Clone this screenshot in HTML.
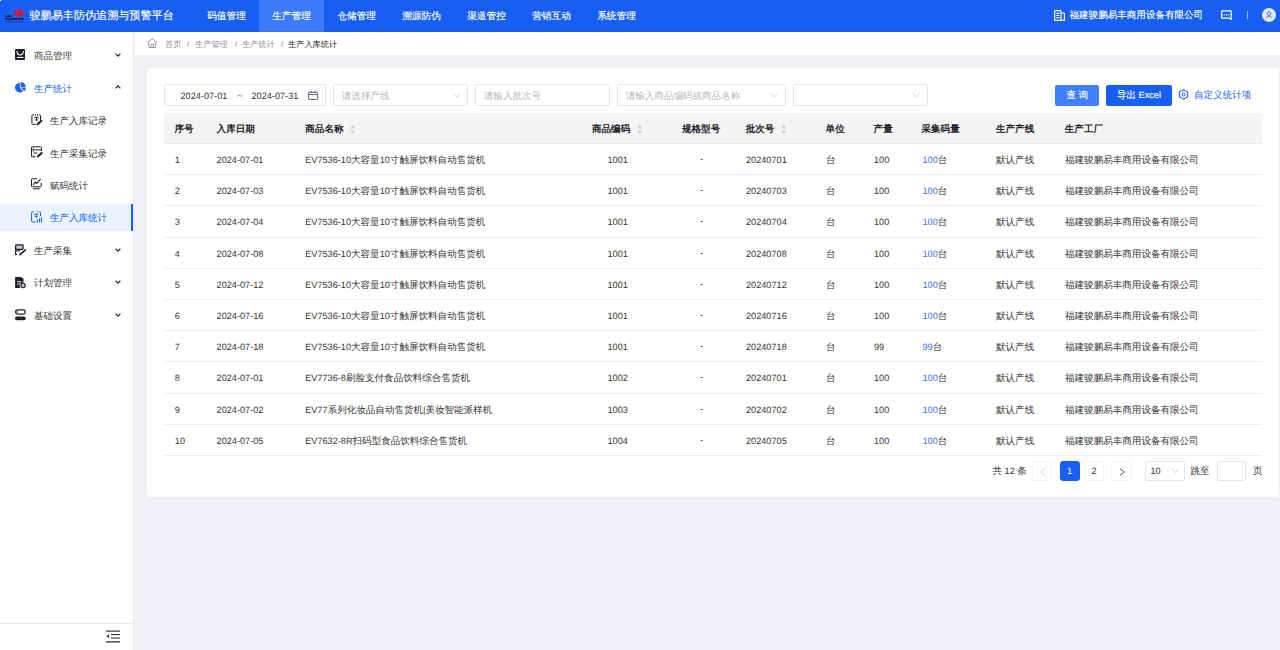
<!DOCTYPE html>
<html><head><meta charset="utf-8">
<style>
*{box-sizing:border-box;margin:0;padding:0}
html,body{width:1280px;height:650px;overflow:hidden;background:#f0f1f5;font-family:"Liberation Sans",sans-serif;color:#1d2129;text-rendering:geometricPrecision}
.a{position:absolute;white-space:nowrap}
#hdr{position:absolute;left:0;top:0;width:1280px;height:32px;background:#175ef3}
.nav{position:absolute;top:0;height:32px;width:65px;line-height:34px;text-align:center;color:#fff;font-size:9.7px;-webkit-text-stroke:0.15px #fff}
.nav.on{background:#3c7bfe}
#side{position:absolute;left:0;top:32px;width:134px;height:618px;background:#fff;border-right:1px solid #e9e9ec}
.mi{position:absolute;left:0;width:133px;height:27px;font-size:9.5px;line-height:27px;color:#333}
.mi .t{position:absolute;left:34px;top:1px}
.mi.sub .t{left:50px;top:1.3px}
.mi.on{background:#e8f3ff;color:#165dff}
.mi svg{position:absolute}
.chev{position:absolute;left:115px;top:11px}
#crumb{position:absolute;left:134px;top:32px;width:1146px;height:23px;background:#fff;font-size:8.2px;line-height:25.2px;color:#86909c}
#card{position:absolute;left:147px;top:68px;width:1132px;height:429px;background:#fff;border-radius:3px}
.inp{position:absolute;top:84px;height:21.5px;border:1px solid #e5e6eb;border-radius:2px;background:#fff;font-size:9.55px;line-height:19.5px;color:#b4b8bf}
.inp .ph{position:absolute;left:7.5px;top:2px}
.inp svg{position:absolute;top:7px}
.btn{position:absolute;top:84.5px;height:21.3px;border-radius:2px;color:#fff;font-size:9.55px;line-height:22.3px;text-align:center;-webkit-text-stroke:0.15px #fff}
#th{position:absolute;left:164px;top:113px;width:1098px;height:31px;background:#f4f4f4;border-bottom:1px solid #e8e8e8;font-weight:bold}
.c{position:absolute;font-size:9.55px;white-space:nowrap;line-height:33px;top:0}
.row{position:absolute;left:164px;width:1098px;height:31.2px;border-bottom:1px solid #ededed;color:#333}
.row .c{line-height:33px}
.blue{color:#3373f6}
span .l,div .l{font-size:9.17px;line-height:0}
.c.l{font-size:9.17px}
.sort{position:absolute;top:11.5px}
.pg{position:absolute;top:461px;height:19.6px;width:20.1px;border:1px solid #f2f3f5;border-radius:2px;font-size:9.55px;line-height:20px;text-align:center;color:#333}
</style></head><body>
<div id="hdr">
  <svg class="a" style="left:0;top:0" width="30" height="32" viewBox="0 0 30 32">
    <g fill="#e0143c">
      <rect x="17" y="9.1" width="4.8" height="7.8" rx="1.6"/>
      <rect x="13.9" y="11.6" width="10.3" height="3" rx="1.5"/>
      <circle cx="15.2" cy="13.3" r="1.5"/><circle cx="22.9" cy="12.9" r="1.5"/>
    </g>
    <g fill="#8a3a7a" opacity=".8"><circle cx="18.5" cy="10.7" r=".6"/><circle cx="20.3" cy="10.7" r=".6"/><circle cx="18.5" cy="15.3" r=".6"/><circle cx="20.3" cy="15.3" r=".6"/><circle cx="19.4" cy="13" r=".5"/></g>
    <g stroke="#141a3c" fill="none">
      <path d="M5.2 16.1H11.7" stroke-width="1.6" stroke-dasharray="2.2 .6" opacity=".85"/>
      <path d="M5.2 18.85H23.5" stroke-width="1.9" stroke-dasharray="2.6 .5"/>
      <path d="M5.5 21.85H23" stroke-width="1.5" stroke-dasharray="1.1 1.6" opacity=".7"/>
    </g>
  </svg>
  <div class="a" style="left:29.5px;top:0;line-height:32px;font-size:11.1px;color:#fff;-webkit-text-stroke:0.15px #fff">骏鹏易丰防伪追溯与预警平台</div>
  <div class="nav" style="left:194px">码值管理</div>
  <div class="nav on" style="left:259px">生产管理</div>
  <div class="nav" style="left:324px">仓储管理</div>
  <div class="nav" style="left:389px">溯源防伪</div>
  <div class="nav" style="left:454px">渠道管控</div>
  <div class="nav" style="left:519px">营销互动</div>
  <div class="nav" style="left:584px">系统管理</div>
  <svg class="a" style="left:1054px;top:10px" width="11" height="11" viewBox="0 0 11 11" fill="none" stroke="#fff" stroke-width="1.2">
    <path d="M0.6 10.4V1.6Q0.6 0.6 1.6 0.6H6Q7 0.6 7 1.6V10.4M7 3H9.6Q10.4 3 10.4 3.8V10.4H0.6"/><path d="M2.3 3.3H5.3M2.3 5.5H5.3M2.3 7.7H5.3"/>
  </svg>
  <div class="a" style="left:1069.5px;top:0;line-height:31px;font-size:9.55px;color:#fff;-webkit-text-stroke:0.15px #fff">福建骏鹏易丰商用设备有限公司</div>
  <svg class="a" style="left:1221px;top:10px" width="11" height="11" viewBox="0 0 11 11" fill="none" stroke="#fff" stroke-width="1.2"><path d="M1.5 0.8H9.4Q10.2 0.8 10.2 1.6V9.6L8.6 8.2H1.5Q0.7 8.2 0.7 7.4V1.6Q0.7 0.8 1.5 0.8Z" stroke-linejoin="round"/><path d="M3.1 4V5.6M5.45 4V5.6M7.8 4V5.6" stroke-width="1"/></svg>
  <div class="a" style="left:1247px;top:11px;width:1px;height:8px;background:rgba(255,255,255,.55)"></div>
  <svg class="a" style="left:1262px;top:8px" width="14" height="14" viewBox="0 0 14 14"><circle cx="7" cy="7" r="7" fill="#e2eafc"/><g fill="none" stroke="#3c6ff0" stroke-width="1"><circle cx="7" cy="5.6" r="1.8"/><path d="M4.3 10.2Q5 8 7 8Q9 8 9.7 10.2"/></g></svg>
</div>
<div class="a" style="left:0;top:31px;width:1280px;height:1px;background:rgba(0,20,90,.07)"></div>
<div class="a" style="left:0;top:0;width:1px;height:1px;background:#fff"></div>

<div id="side">
  <div class="mi" style="top:9.5px">
    <svg style="left:15px;top:7px" width="10" height="11" viewBox="0 0 10 11"><rect x="0" y="0" width="10" height="11" rx="0.9" fill="#1d2129"/><path d="M1.9 2.1Q2.2 5.9 5.1 5.9Q8 5.9 8.5 2.1" fill="none" stroke="#fff" stroke-width="1.05"/><rect x="2.1" y="7.9" width="6.4" height="1.1" fill="#fff"/></svg>
    <span class="t">商品管理</span>
    <svg class="chev" width="6" height="4" viewBox="0 0 6 4"><path d="M0.6 0.7L3 3.1L5.4 0.7" fill="none" stroke="#1d2129" stroke-width="1.2"/></svg>
  </div>
  <div class="mi" style="top:42.5px;color:#165dff">
    <svg style="left:15px;top:7.5px" width="12" height="11" viewBox="0 0 12 11" fill="#1d62f7"><path d="M4.9 5.6L4.9 0.7A4.9 4.9 0 1 0 8.05 9.35Z"/><path d="M5.7 5.1L5.7 0.05A4.95 4.95 0 0 1 10.65 5.1Z"/><path d="M6.2 5.45L10.75 5.45A4.6 4.6 0 0 1 9.15 9.2Z"/></svg>
    <span class="t">生产统计</span>
    <svg class="chev" width="6" height="4" viewBox="0 0 6 4" style="top:10.5px"><path d="M0.6 3.3L3 0.9L5.4 3.3" fill="none" stroke="#1d2129" stroke-width="1.2"/></svg>
  </div>
  <div class="mi sub" style="top:75px">
    <svg style="left:31px;top:7px" width="12" height="12" viewBox="0 0 12 12" fill="none" stroke="#1d2129" stroke-width="1"><path d="M3 1H1.6Q0.9 1 0.9 1.7V9.6Q0.9 10.3 1.6 10.3H4.8M8 1H8.8Q9.5 1 9.5 1.7V6"/><path d="M4.3 0.2V1.8M6.6 0.2V1.8"/><path d="M3.3 3.4H7.7M5.5 3.4V6.2"/><path d="M3.8 5.4H7.2L5.5 7.2Z" fill="#1d2129" stroke="none"/><path d="M6.6 10.3L10.3 6.8" stroke-width="2.1" stroke-linecap="round"/></svg>
    <span class="t">生产入库记录</span>
  </div>
  <div class="mi sub" style="top:107.5px">
    <svg style="left:31px;top:6.5px" width="12" height="12" viewBox="0 0 12 12" fill="none" stroke="#1d2129" stroke-width="1"><path d="M4.5 10.8H1.3Q0.5 10.8 0.5 10V1.6Q0.5 0.8 1.3 0.8H9.7Q10.5 0.8 10.5 1.6V5M0.5 3.9H10.5"/><path d="M2.5 7H6.3"/><g fill="#1d2129" stroke="none"><circle cx="2.3" cy="2.4" r="0.5"/><circle cx="2.3" cy="5.5" r="0.5"/><circle cx="2.3" cy="9" r="0.5"/></g><path d="M7.1 10.3L10.6 7" stroke-width="2.1" stroke-linecap="round"/></svg>
    <span class="t">生产采集记录</span>
  </div>
  <div class="mi sub" style="top:139.5px">
    <svg style="left:31px;top:6.5px" width="12" height="12" viewBox="0 0 12 12" fill="none" stroke="#1d2129" stroke-width="1"><path d="M6.2 0.8H1.3Q0.5 0.8 0.5 1.6V8Q0.5 8.8 1.3 8.8H9.5Q10.3 8.8 10.3 8V4.8"/><path d="M2.2 10.8H8.8"/><path d="M2.2 6.8L4.3 4.2L5.6 5.5L9.6 1.2" stroke-width="1.2"/></svg>
    <span class="t">赋码统计</span>
  </div>
  <div class="mi sub on" style="top:171.8px">
    <svg style="left:31px;top:7.5px" width="12" height="12" viewBox="0 0 12 12" fill="none" stroke="#165dff" stroke-width="1"><path d="M3 0.9H1.6Q0.6 0.9 0.6 1.9V10Q0.6 11 1.6 11H4.5M8 0.9H8.7Q9.5 0.9 9.5 1.7V5.2"/><circle cx="6.3" cy="0.9" r="0.6" fill="#165dff" stroke="none"/><path d="M3.2 3.2H7.4M5.3 3.2V5.8"/><path d="M3.7 5.1H6.9L5.3 6.9Z" fill="#165dff" stroke="none"/><path d="M6.5 8.6V11.3M8.5 7.6V11.3M10.5 6.6V11.3" stroke-width="1.1"/></svg>
    <span class="t">生产入库统计</span>
    <div style="position:absolute;left:131px;top:0;width:2px;height:27px;background:#165dff"></div>
  </div>
  <div class="mi" style="top:204.5px">
    <svg style="left:15px;top:7px" width="12" height="12" viewBox="0 0 12 12" fill="none" stroke="#1d2129"><path d="M0.65 11V1.5Q0.65 0.8 1.4 0.8H7.3Q8 0.8 8 1.5V4.6Q8 5.3 7.3 5.3H0.65" stroke-width="1.3" fill="#c8c9cc"/><path d="M1.2 6.8H5.2" stroke-width="1.1"/><path d="M0.6 10.6H2.3" stroke-width="1"/><path d="M5 10.6L10.4 5.9" stroke-width="1.7" stroke-linecap="round"/></svg>
    <span class="t">生产采集</span>
    <svg class="chev" width="6" height="4" viewBox="0 0 6 4"><path d="M0.6 0.7L3 3.1L5.4 0.7" fill="none" stroke="#1d2129" stroke-width="1.2"/></svg>
  </div>
  <div class="mi" style="top:237px">
    <svg style="left:15px;top:7.5px" width="12" height="12" viewBox="0 0 12 12"><path d="M0.1 0.1H6.3L8.5 2.1V5.6A3.3 3.3 0 0 0 5.3 10.9H0.1Z" fill="#1d2129"/><path d="M2 4.7H6.2M2 7H5.2" stroke="#fff" stroke-width="0.9"/><circle cx="8.15" cy="8.5" r="2.05" fill="none" stroke="#1d2129" stroke-width="1.3"/><circle cx="8.15" cy="8.3" r="0.6" fill="#4a7bd8"/></svg>
    <span class="t">计划管理</span>
    <svg class="chev" width="6" height="4" viewBox="0 0 6 4"><path d="M0.6 0.7L3 3.1L5.4 0.7" fill="none" stroke="#1d2129" stroke-width="1.2"/></svg>
  </div>
  <div class="mi" style="top:269.5px">
    <svg style="left:15px;top:7px" width="12" height="12" viewBox="0 0 12 12"><rect x="0.6" y="0.9" width="9.6" height="4.3" rx="2.15" fill="none" stroke="#1d2129" stroke-width="1.2"/><circle cx="2.4" cy="3" r="0.7" fill="#1d2129"/><rect x="0" y="7.4" width="10.8" height="3.9" rx="1.95" fill="#1d2129"/></svg>
    <span class="t">基础设置</span>
    <svg class="chev" width="6" height="4" viewBox="0 0 6 4"><path d="M0.6 0.7L3 3.1L5.4 0.7" fill="none" stroke="#1d2129" stroke-width="1.2"/></svg>
  </div>
  <div style="position:absolute;left:0;top:591px;width:133px;height:1px;background:#e5e6eb"></div>
  <svg style="position:absolute;left:106px;top:598px" width="14" height="13" viewBox="0 0 14 13" fill="#333">
    <rect x="0" y="0.5" width="14" height="1.2"/><rect x="5" y="4" width="9" height="1.1"/><rect x="5" y="7.5" width="9" height="1.1"/><rect x="0" y="11.2" width="14" height="1.3"/><path d="M0.3 6.3L3 4.3V8.3Z"/>
  </svg>
</div>

<div id="crumb">
  <svg class="a" style="left:13px;top:5.9px" width="11" height="10" viewBox="0 0 11 10" fill="none" stroke="#86909c" stroke-width="0.9"><path d="M0.5 4.7L5.2 0.6L9.9 4.7M1.7 3.8V9.4H8.7V3.8M4 9.4V6.2H6.4V9.4"/></svg>
  <span class="a" style="left:31px">首页</span>
  <span class="a" style="left:53px">/</span>
  <span class="a" style="left:61px">生产管理</span>
  <span class="a" style="left:101px">/</span>
  <span class="a" style="left:108px">生产统计</span>
  <span class="a" style="left:147px">/</span>
  <span class="a" style="left:154px;color:#1d2129">生产入库统计</span>
</div>

<div id="card"></div>

<div class="inp" style="left:164px;width:161.7px;color:#333">
  <span class="ph" style="left:15.5px;font-size:9.17px">2024-07-01</span><svg style="left:71.6px;top:9px" width="6" height="3.4" viewBox="0 0 6 3.4"><path d="M0.5 2.6Q0.9 0.8 2.2 1.1Q3 1.4 3.6 2.1Q4.6 2.9 5.5 0.9" fill="none" stroke="#8a9099" stroke-width="0.9"/></svg><span class="ph" style="left:86.5px;font-size:9.17px">2024-07-31</span>
  <svg style="left:143px;top:5.8px" width="10" height="9" viewBox="0 0 10 9" fill="none" stroke="#4e5969" stroke-width="0.9"><rect x="0.5" y="1.2" width="9" height="7.3" rx="0.6"/><path d="M0.5 3.6H9.5M3 0V2M7 0V2"/></svg>
</div>
<div class="inp" style="left:333.3px;width:134.3px"><span class="ph">请选择产线</span>
  <svg style="left:118.5px;top:7.8px" width="7" height="5" viewBox="0 0 7 5"><path d="M0.4 0.5L3.5 4.1L6.6 0.5" fill="none" stroke="#c9cdd4" stroke-width="0.9"/></svg></div>
<div class="inp" style="left:475.3px;width:134.3px"><span class="ph">请输入批次号</span></div>
<div class="inp" style="left:617.2px;width:168.4px"><span class="ph">请输入商品编码或商品名称</span>
  <svg style="left:153px;top:7.8px" width="7" height="5" viewBox="0 0 7 5"><path d="M0.4 0.5L3.5 4.1L6.6 0.5" fill="none" stroke="#c9cdd4" stroke-width="0.9"/></svg></div>
<div class="inp" style="left:793.3px;width:134.3px">
  <svg style="left:118.5px;top:7.8px" width="7" height="5" viewBox="0 0 7 5"><path d="M0.4 0.5L3.5 4.1L6.6 0.5" fill="none" stroke="#c9cdd4" stroke-width="0.9"/></svg></div>

<div class="btn" style="left:1055.3px;width:43.7px;background:#4080ff">查 询</div>
<div class="btn" style="left:1106px;width:65.9px;background:#175ef3">导出<span class="l"> Excel</span></div>
<svg class="a" style="left:1178px;top:88.8px" width="11" height="11" viewBox="0 0 11 11" fill="none" stroke="#165dff" stroke-width="1"><path d="M5.5 0.8L9.6 3.1V7.9L5.5 10.2L1.4 7.9V3.1Z" stroke-linejoin="round"/><path d="M5.5 0.4V1.3M9.95 3.0L9.2 3.4M9.95 8.0L9.2 7.6M5.5 10.6V9.7M1.05 8.0L1.8 7.6M1.05 3.0L1.8 3.4" stroke-width="1.4"/><circle cx="5.5" cy="5.5" r="1.6"/></svg>
<span class="a" style="left:1194px;top:84.5px;line-height:21.3px;font-size:9.55px;color:#165dff">自定义统计项</span>

<div id="th">
  <span class="c" style="left:10.4px">序号</span>
  <span class="c" style="left:52.6px">入库日期</span>
  <span class="c" style="left:141.3px">商品名称</span>
  <svg class="sort" style="left:185.8px" width="5.4" height="9" viewBox="0 0 5.4 9" fill="#c9cdd4"><path d="M2.7 0.1L5.4 3.4H0Z M0 5.5H5.4L2.7 8.7Z"/></svg>
  <span class="c" style="left:428px">商品编码</span>
  <svg class="sort" style="left:472.8px" width="5.4" height="9" viewBox="0 0 5.4 9" fill="#c9cdd4"><path d="M2.7 0.1L5.4 3.4H0Z M0 5.5H5.4L2.7 8.7Z"/></svg>
  <span class="c" style="left:518px">规格型号</span>
  <span class="c" style="left:581.7px">批次号</span>
  <svg class="sort" style="left:616.8px" width="5.4" height="9" viewBox="0 0 5.4 9" fill="#c9cdd4"><path d="M2.7 0.1L5.4 3.4H0Z M0 5.5H5.4L2.7 8.7Z"/></svg>
  <span class="c" style="left:661.6px">单位</span>
  <span class="c" style="left:709.6px">产量</span>
  <span class="c" style="left:757.5px">采集码量</span>
  <span class="c" style="left:832px">生产产线</span>
  <span class="c" style="left:900.8px">生产工厂</span>
</div>
<div class="row" style="top:144px;height:31px"><span class="c l" style="left:10.8px">1</span><span class="c l" style="left:52.6px">2024-07-01</span><span class="c" style="left:141.2px"><span class="l">EV7536-10</span>大容量<span class="l">10</span>寸触屏饮料自动售货机</span><span class="c l" style="left:443.5px">1001</span><span class="c l" style="left:536px;top:-1px">-</span><span class="c l" style="left:582px">20240701</span><span class="c" style="left:662px">台</span><span class="c l" style="left:710px">100</span><span class="c" style="left:758.5px"><span class="blue l">100</span>台</span><span class="c" style="left:832px">默认产线</span><span class="c" style="left:901px">福建骏鹏易丰商用设备有限公司</span></div>
<div class="row" style="top:175px;height:31px"><span class="c l" style="left:10.8px">2</span><span class="c l" style="left:52.6px">2024-07-03</span><span class="c" style="left:141.2px"><span class="l">EV7536-10</span>大容量<span class="l">10</span>寸触屏饮料自动售货机</span><span class="c l" style="left:443.5px">1001</span><span class="c l" style="left:536px;top:-1px">-</span><span class="c l" style="left:582px">20240703</span><span class="c" style="left:662px">台</span><span class="c l" style="left:710px">100</span><span class="c" style="left:758.5px"><span class="blue l">100</span>台</span><span class="c" style="left:832px">默认产线</span><span class="c" style="left:901px">福建骏鹏易丰商用设备有限公司</span></div>
<div class="row" style="top:206px;height:32px"><span class="c l" style="left:10.8px">3</span><span class="c l" style="left:52.6px">2024-07-04</span><span class="c" style="left:141.2px"><span class="l">EV7536-10</span>大容量<span class="l">10</span>寸触屏饮料自动售货机</span><span class="c l" style="left:443.5px">1001</span><span class="c l" style="left:536px;top:-1px">-</span><span class="c l" style="left:582px">20240704</span><span class="c" style="left:662px">台</span><span class="c l" style="left:710px">100</span><span class="c" style="left:758.5px"><span class="blue l">100</span>台</span><span class="c" style="left:832px">默认产线</span><span class="c" style="left:901px">福建骏鹏易丰商用设备有限公司</span></div>
<div class="row" style="top:238px;height:31px"><span class="c l" style="left:10.8px">4</span><span class="c l" style="left:52.6px">2024-07-08</span><span class="c" style="left:141.2px"><span class="l">EV7536-10</span>大容量<span class="l">10</span>寸触屏饮料自动售货机</span><span class="c l" style="left:443.5px">1001</span><span class="c l" style="left:536px;top:-1px">-</span><span class="c l" style="left:582px">20240708</span><span class="c" style="left:662px">台</span><span class="c l" style="left:710px">100</span><span class="c" style="left:758.5px"><span class="blue l">100</span>台</span><span class="c" style="left:832px">默认产线</span><span class="c" style="left:901px">福建骏鹏易丰商用设备有限公司</span></div>
<div class="row" style="top:269px;height:31px"><span class="c l" style="left:10.8px">5</span><span class="c l" style="left:52.6px">2024-07-12</span><span class="c" style="left:141.2px"><span class="l">EV7536-10</span>大容量<span class="l">10</span>寸触屏饮料自动售货机</span><span class="c l" style="left:443.5px">1001</span><span class="c l" style="left:536px;top:-1px">-</span><span class="c l" style="left:582px">20240712</span><span class="c" style="left:662px">台</span><span class="c l" style="left:710px">100</span><span class="c" style="left:758.5px"><span class="blue l">100</span>台</span><span class="c" style="left:832px">默认产线</span><span class="c" style="left:901px">福建骏鹏易丰商用设备有限公司</span></div>
<div class="row" style="top:300px;height:31px"><span class="c l" style="left:10.8px">6</span><span class="c l" style="left:52.6px">2024-07-16</span><span class="c" style="left:141.2px"><span class="l">EV7536-10</span>大容量<span class="l">10</span>寸触屏饮料自动售货机</span><span class="c l" style="left:443.5px">1001</span><span class="c l" style="left:536px;top:-1px">-</span><span class="c l" style="left:582px">20240716</span><span class="c" style="left:662px">台</span><span class="c l" style="left:710px">100</span><span class="c" style="left:758.5px"><span class="blue l">100</span>台</span><span class="c" style="left:832px">默认产线</span><span class="c" style="left:901px">福建骏鹏易丰商用设备有限公司</span></div>
<div class="row" style="top:331px;height:31px"><span class="c l" style="left:10.8px">7</span><span class="c l" style="left:52.6px">2024-07-18</span><span class="c" style="left:141.2px"><span class="l">EV7536-10</span>大容量<span class="l">10</span>寸触屏饮料自动售货机</span><span class="c l" style="left:443.5px">1001</span><span class="c l" style="left:536px;top:-1px">-</span><span class="c l" style="left:582px">20240718</span><span class="c" style="left:662px">台</span><span class="c l" style="left:710px">99</span><span class="c" style="left:758.5px"><span class="blue l">99</span>台</span><span class="c" style="left:832px">默认产线</span><span class="c" style="left:901px">福建骏鹏易丰商用设备有限公司</span></div>
<div class="row" style="top:362px;height:32px"><span class="c l" style="left:10.8px">8</span><span class="c l" style="left:52.6px">2024-07-01</span><span class="c" style="left:141.2px"><span class="l">EV7736-8</span>刷脸支付食品饮料综合售货机</span><span class="c l" style="left:443.5px">1002</span><span class="c l" style="left:536px;top:-1px">-</span><span class="c l" style="left:582px">20240701</span><span class="c" style="left:662px">台</span><span class="c l" style="left:710px">100</span><span class="c" style="left:758.5px"><span class="blue l">100</span>台</span><span class="c" style="left:832px">默认产线</span><span class="c" style="left:901px">福建骏鹏易丰商用设备有限公司</span></div>
<div class="row" style="top:394px;height:31px"><span class="c l" style="left:10.8px">9</span><span class="c l" style="left:52.6px">2024-07-02</span><span class="c" style="left:141.2px"><span class="l">EV77</span>系列化妆品自动售货机<span class="l">|</span>美妆智能派样机</span><span class="c l" style="left:443.5px">1003</span><span class="c l" style="left:536px;top:-1px">-</span><span class="c l" style="left:582px">20240702</span><span class="c" style="left:662px">台</span><span class="c l" style="left:710px">100</span><span class="c" style="left:758.5px"><span class="blue l">100</span>台</span><span class="c" style="left:832px">默认产线</span><span class="c" style="left:901px">福建骏鹏易丰商用设备有限公司</span></div>
<div class="row" style="top:425px;height:31px"><span class="c l" style="left:10.8px">10</span><span class="c l" style="left:52.6px">2024-07-05</span><span class="c" style="left:141.2px"><span class="l">EV7632-8R</span>扫码型食品饮料综合售货机</span><span class="c l" style="left:443.5px">1004</span><span class="c l" style="left:536px;top:-1px">-</span><span class="c l" style="left:582px">20240705</span><span class="c" style="left:662px">台</span><span class="c l" style="left:710px">100</span><span class="c" style="left:758.5px"><span class="blue l">100</span>台</span><span class="c" style="left:832px">默认产线</span><span class="c" style="left:901px">福建骏鹏易丰商用设备有限公司</span></div>

<div class="a" style="left:992.5px;top:461px;line-height:22.6px;font-size:9.55px;color:#333">共<span class="l"> 12 </span>条</div>
<div class="pg" style="left:1032.4px"><svg style="position:absolute;left:6.5px;top:5.5px" width="6" height="8" viewBox="0 0 6 8"><path d="M5 0.5L1 4L5 7.5" fill="none" stroke="#c9cdd4" stroke-width="0.9"/></svg></div>
<div class="pg" style="left:1059.6px;background:#175ef3;border-color:#175ef3;color:#fff;border-radius:3px"><span class="l">1</span></div>
<div class="pg" style="left:1084.1px"><span class="l">2</span></div>
<div class="pg" style="left:1111.2px"><svg style="position:absolute;left:6.8px;top:5.5px" width="6" height="8" viewBox="0 0 6 8"><path d="M1 0.5L5 4L1 7.5" fill="none" stroke="#333" stroke-width="0.9"/></svg></div>
<div class="pg" style="left:1145.3px;width:39.4px;border-color:#e5e6eb;text-align:left;padding-left:4.2px"><span class="l">10</span><svg style="position:absolute;left:25.6px;top:6.3px" width="7" height="6" viewBox="0 0 7 6"><path d="M0.4 0.6L3.5 4.6L6.6 0.6" fill="none" stroke="#c9cdd4" stroke-width="0.9"/></svg></div>
<div class="a" style="left:1190.5px;top:461px;line-height:22.6px;font-size:9.55px;color:#333">跳至</div>
<div class="pg" style="left:1216.7px;width:28.9px;border-color:#e5e6eb"></div>
<div class="a" style="left:1253px;top:461px;line-height:22.6px;font-size:9.55px;color:#333">页</div>
</body></html>
